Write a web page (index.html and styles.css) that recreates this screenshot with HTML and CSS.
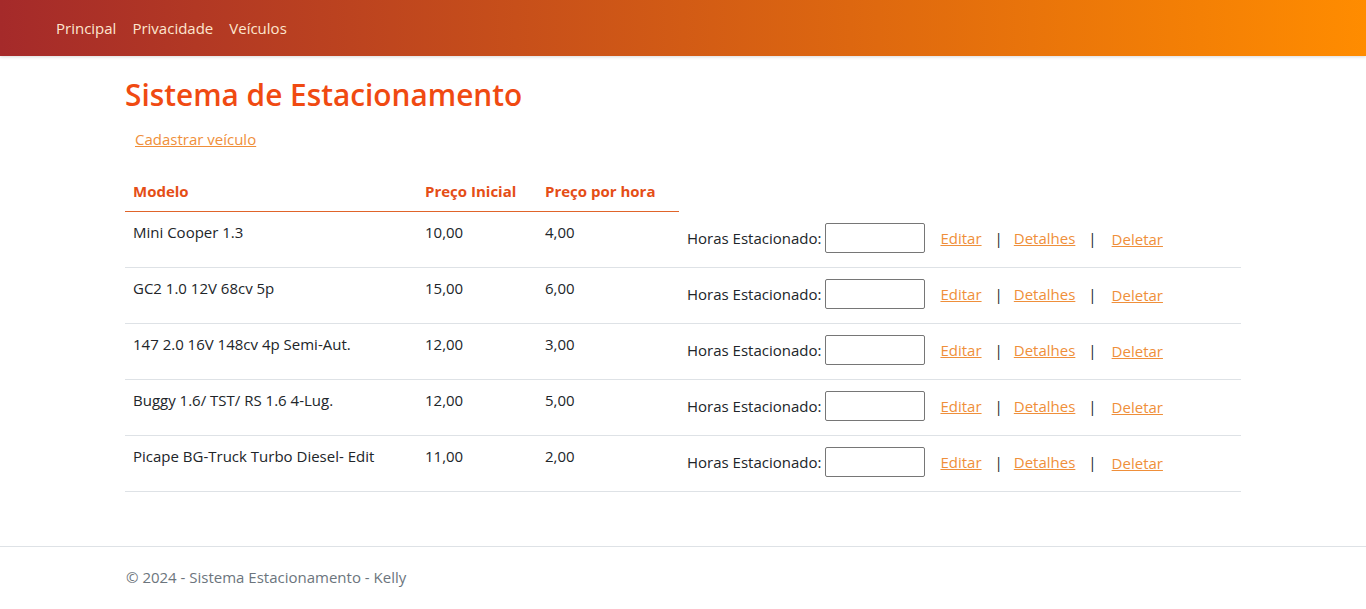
FILE: index.html
```html
<!DOCTYPE html>
<html lang="pt-br">
<head>
<meta charset="utf-8">
<title>Sistema de Estacionamento</title>
<link rel="stylesheet" href="styles.css">
</head>
<body>
<header class="navbar">
  <nav class="nav">
    <a href="#" class="nav-link">Principal</a>
    <a href="#" class="nav-link">Privacidade</a>
    <a href="#" class="nav-link">Veículos</a>
  </nav>
</header>
<main class="container">
  <h1 class="title">Sistema de Estacionamento</h1>
  <p class="create"><a href="#" class="link">Cadastrar veículo</a></p>
  <table class="table">
    <thead>
      <tr>
        <th class="th c1">Modelo</th>
        <th class="th c2">Preço Inicial</th>
        <th class="th c3">Preço por hora</th>
      </tr>
    </thead>
    <tbody>
      <tr>
        <td>Mini Cooper 1.3</td><td>10,00</td><td>4,00</td>
        <td class="actions"><div class="act"><span class="lbl">Horas Estacionado:</span><input class="inp" type="text"><a href="#" class="link ed">Editar</a><span class="sep">|</span><a href="#" class="link">Detalhes</a><span class="sep">|</span><a href="#" class="link del">Deletar</a></div></td>
      </tr>
      <tr>
        <td>GC2 1.0 12V 68cv 5p</td><td>15,00</td><td>6,00</td>
        <td class="actions"><div class="act"><span class="lbl">Horas Estacionado:</span><input class="inp" type="text"><a href="#" class="link ed">Editar</a><span class="sep">|</span><a href="#" class="link">Detalhes</a><span class="sep">|</span><a href="#" class="link del">Deletar</a></div></td>
      </tr>
      <tr>
        <td>147 2.0 16V 148cv 4p Semi-Aut.</td><td>12,00</td><td>3,00</td>
        <td class="actions"><div class="act"><span class="lbl">Horas Estacionado:</span><input class="inp" type="text"><a href="#" class="link ed">Editar</a><span class="sep">|</span><a href="#" class="link">Detalhes</a><span class="sep">|</span><a href="#" class="link del">Deletar</a></div></td>
      </tr>
      <tr>
        <td>Buggy 1.6/ TST/ RS 1.6 4-Lug.</td><td>12,00</td><td>5,00</td>
        <td class="actions"><div class="act"><span class="lbl">Horas Estacionado:</span><input class="inp" type="text"><a href="#" class="link ed">Editar</a><span class="sep">|</span><a href="#" class="link">Detalhes</a><span class="sep">|</span><a href="#" class="link del">Deletar</a></div></td>
      </tr>
      <tr>
        <td>Picape BG-Truck Turbo Diesel- Edit</td><td>11,00</td><td>2,00</td>
        <td class="actions"><div class="act"><span class="lbl">Horas Estacionado:</span><input class="inp" type="text"><a href="#" class="link ed">Editar</a><span class="sep">|</span><a href="#" class="link">Detalhes</a><span class="sep">|</span><a href="#" class="link del">Deletar</a></div></td>
      </tr>
    </tbody>
  </table>
</main>
<footer class="footer">
  <div class="footer-inner">&copy; 2024 - Sistema Estacionamento - Kelly</div>
</footer>
</body>
</html>
```

FILE: styles.css
```css
* { box-sizing: border-box; }
html, body { margin: 0; padding: 0; }
body {
  font-family: "Open Sans", "Noto Sans", sans-serif;
  font-size: 15px;
  color: #212529;
  background: #fff;
}
.navbar {
  height: 56px;
  background: linear-gradient(to right, #a52a2a, #ff8c00);
  box-shadow: 0 1px 3px rgba(0,0,0,0.15);
  display: flex;
  align-items: center;
  padding: 0 48px;
}
.nav { display: flex; }
.nav-link {
  color: #fde6cf;
  text-decoration: none;
  padding: 0 8px;
  font-size: 15px;
  line-height: 24px;
}
.container {
  width: 1116px;
  margin: 0 auto;
  padding-top: 19px;
  padding-bottom: 54px;
}
.title {
  margin: 0 0 12px 0;
  font-size: 29.8px;
  font-weight: 600;
  color: #f04a12;
  line-height: 40px;
}
.create { margin: 0 0 20px 10px; line-height: 24px; }
.link { color: #ef8f3a; text-decoration: underline; }
.table { width: 100%; border-collapse: collapse; }
.th {
  text-align: left;
  color: #e54e16;
  font-weight: 700;
  padding: 8px;
  line-height: 24px;
  border-bottom: 1px solid #e0642a;
}
.c1 { width: 292px; }
.c2 { width: 120px; }
.c3 { width: 142px; }
td {
  padding: 8px;
  line-height: 24px;
  vertical-align: top;
  border-bottom: 1px solid #dee2e6;
  height: 56px;
}
.act { display: flex; align-items: center; padding-top: 3px; }
.lbl { margin-right: 4px; }
.inp {
  width: 100px;
  height: 30px;
  border: 1px solid #767676;
  border-radius: 2px;
  margin: 0;
}
.ed { margin-left: 15px; }
.sep { margin: 0 11px 0 13px; }
.del { margin-left: 4px; position: relative; top: 1px; }
.footer { border-top: 1px solid #dee2e6; height: 62px; }
.footer-inner {
  width: 1116px;
  margin: 0 auto;
  color: #6c757d;
  line-height: 60px;
  padding-left: 1px;
}
```
